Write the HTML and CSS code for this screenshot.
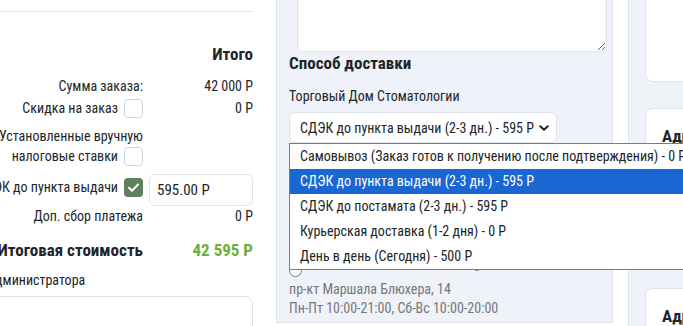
FILE: index.html
```html
<!DOCTYPE html>
<html lang="ru">
<head>
<meta charset="utf-8">
<title>Оформление заказа</title>
<link rel="stylesheet" href="styles.css">
</head>
<body>
<div class="page">
  <aside class="summary">
    <hr class="rule">
    <h3 class="summary-title">Итого</h3>
    <div class="row row-sum">
      <span class="label">Сумма заказа:</span>
      <span class="value">42 000 Р</span>
    </div>
    <div class="row row-discount">
      <span class="label">Скидка на заказ <span class="check"></span></span>
      <span class="value">0 Р</span>
    </div>
    <div class="row row-tax">
      <span class="label-block">Установленные вручную<br>налоговые ставки<span class="check check-inline"></span></span>
      <span class="value"></span>
    </div>
    <div class="row row-ship">
      <span class="label label-top">СДЭК до пункта выдачи <span class="check check-on"><svg viewBox="0 0 19 19" width="19" height="19"><path d="M5 9.8l3 2.9 6-6.2" fill="none" stroke="#fff" stroke-width="2" stroke-linecap="round" stroke-linejoin="round"/></svg></span></span>
      <span class="value"><span class="price-input">595.00 Р</span></span>
    </div>
    <div class="row row-fee">
      <span class="label">Доп. сбор платежа</span>
      <span class="value">0 Р</span>
    </div>
    <div class="row row-total">
      <span class="label total-label">Итоговая стоимость</span>
      <span class="value total-value">42 595 Р</span>
    </div>
    <div class="admin-label">Комментарий администратора</div>
    <div class="admin-box"></div>
  </aside>

  <section class="delivery">
    <textarea class="note"></textarea>
    <h3 class="section-title">Способ доставки</h3>
    <div class="vendor">Торговый Дом Стоматологии</div>
    <div class="select-wrap">
      <div class="select">
        <span>СДЭК до пункта выдачи (2-3 дн.) - 595 Р</span>
        <svg class="chev" viewBox="0 0 10 6" width="10" height="6"><path d="M1.2 1.2L5 4.8l3.8-3.6" fill="none" stroke="#222" stroke-width="1.9" stroke-linecap="round" stroke-linejoin="round"/></svg>
      </div>
      <div class="dropdown">
        <div class="opt">Самовывоз (Заказ готов к получению после подтверждения) - 0 Р</div>
        <div class="opt opt-active">СДЭК до пункта выдачи (2-3 дн.) - 595 Р</div>
        <div class="opt">СДЭК до постамата (2-3 дн.) - 595 Р</div>
        <div class="opt">Курьерская доставка (1-2 дня) - 0 Р</div>
        <div class="opt">День в день (Сегодня) - 500 Р</div>
      </div>
    </div>
    <div class="point">
      <div class="point-head">
        <span class="radio"></span>
        <span class="point-name">Пункт выдачи СДЭК №14</span>
        <svg class="point-icon" viewBox="0 0 10 10" width="10" height="10"><circle cx="5" cy="5" r="4" fill="none" stroke="#444" stroke-width="1.4"/></svg>
      </div>
      <div class="point-addr">пр-кт Маршала Блюхера, 14</div>
      <div class="point-addr">Пн-Пт 10:00-21:00, Сб-Вс 10:00-20:00</div>
    </div>
  </section>

  <section class="addresses">
    <div class="card card-first"></div>
    <div class="card card-mid"><div class="card-title">Адрес доставки</div></div>
    <div class="card"><div class="card-title">Адрес плательщика</div></div>
  </section>
</div>
</body>
</html>
```

FILE: styles.css
```css
html, body {
  margin: 0;
  padding: 0;
}
body {
  width: 683px;
  height: 326px;
  overflow: hidden;
  background: #ffffff;
  font-family: Roboto, "Noto Sans", sans-serif;
  font-stretch: 87.5%;
  font-size: 14px;
  line-height: 20px;
  color: #212529;
}
.page {
  display: flex;
  align-items: flex-start;
  margin-left: -124px;
}

/* ---------- summary column ---------- */
.summary {
  flex: none;
  width: 400px;
  box-sizing: border-box;
  padding: 11px 23px 0 29px;
}
.rule {
  border: 0;
  border-top: 1px solid #e4e7ec;
  margin: 0 0 0 -13px;
}
.summary-title {
  margin: 32px 0 0;
  text-align: right;
  font-size: 17px;
  line-height: 20px;
  font-weight: 700;
}
.row {
  display: grid;
  grid-template-columns: 1fr 104px;
  column-gap: 6px;
  align-items: center;
}
.label {
  display: flex;
  justify-content: flex-end;
  align-items: center;
  gap: 6px;
  white-space: nowrap;
  text-align: right;
}
.label-block {
  display: block;
  text-align: right;
  white-space: nowrap;
}
.label-top { align-self: start; margin-top: 3px; }
.value { text-align: right; }
.row-sum { margin-top: 12px; }
.row-discount { margin-top: 2px; }
.row-tax { margin-top: 8px; }
.row-ship { margin-top: 8px; }
.row-total { margin-top: 14px; }
.check {
  flex: none;
  width: 19px;
  height: 19px;
  box-sizing: border-box;
  border: 1.5px solid #cbd4e3;
  border-radius: 4px;
  background: #fff;
  display: inline-flex;
}
.check-inline {
  display: inline-block;
  vertical-align: middle;
  margin: -2px 0 0 6px;
}
.check-on {
  border: 0;
  background: #5f805f;
}
.price-input {
  display: block;
  height: 32px;
  box-sizing: border-box;
  border: 1px solid #dfe4ec;
  border-radius: 6px;
  padding: 5px 7px;
  text-align: left;
  font-size: 15px;
}
.total-label,
.total-value {
  font-size: 17px;
  font-weight: 700;
}
.total-value { color: #6aaf3d; }
.admin-label {
  margin-top: 10px;
}
.admin-box {
  margin: 6px 0 0 -13px;
  height: 60px;
  border: 1px solid #dfe4ec;
  border-radius: 8px;
}

/* ---------- delivery column ---------- */
.delivery {
  flex: none;
  position: relative;
  width: 337px;
  height: 343px;
  box-sizing: border-box;
  margin-top: -20px;
  padding: 0 12px;
  border: 1px solid #dfe4ec;
  background: #eff2f8;
}
.note {
  display: block;
  width: 310px;
  height: 72px;
  box-sizing: border-box;
  margin: -1px 0 0 8px;
  border: 1px solid #dfe4ec;
  border-radius: 0 0 6px 6px;
  background: #fff;
  resize: both;
}
.section-title {
  margin: 1px 0 0;
  font-size: 17px;
  line-height: 20px;
  font-weight: 700;
}
.vendor {
  margin-top: 13px;
}
.select-wrap {
  position: relative;
  margin-top: 6px;
}
.select {
  display: flex;
  align-items: center;
  justify-content: space-between;
  width: 268px;
  height: 31px;
  box-sizing: border-box;
  padding: 0 7px 0 10px;
  border: 1px solid #dfe4ec;
  border-radius: 6px;
  background: #fff;
  white-space: nowrap;
}
.dropdown {
  position: absolute;
  top: 31px;
  left: 0;
  width: 420px;
  border: 1px solid #7b7b7b;
  background: #fff;
  z-index: 5;
}
.opt {
  height: 25px;
  line-height: 25px;
  padding-left: 10px;
  white-space: nowrap;
}
.opt-active {
  background: #1a66d2;
  color: #fff;
}
.point {
  margin-top: 110px;
}
.point-head {
  display: flex;
  align-items: flex-start;
  gap: 8px;
}
.radio {
  flex: none;
  width: 13px;
  height: 13px;
  margin-top: 11px;
  box-sizing: border-box;
  border: 1px solid #777;
  border-radius: 50%;
  background: #fff;
}
.point-name {
  font-weight: 700;
  line-height: 16px;
  white-space: nowrap;
}
.point-icon {
  flex: none;
  margin: 8px 0 0 4px;
}
.point-addr {
  line-height: 19px;
  color: #777;
}
.point-head + .point-addr { margin-top: 3px; }

/* ---------- addresses column ---------- */
.addresses {
  flex: 1;
  min-width: 0;
  margin: -100px 0 0 15px;
  padding: 0 0 20px 16px;
  border-left: 1px solid #dfe4ec;
  background: #eff2f8;
}
.card {
  width: 300px;
  margin-top: 26px;
  padding: 17px 16px;
  border: 1px solid #dfe4ec;
  border-radius: 8px;
  background: #fff;
  height: 120px;
  box-sizing: border-box;
}
.card-first {
  margin-top: 0;
  height: 182px;
  border-top: 0;
  border-radius: 0 0 8px 8px;
}
.card-mid { height: 154px; }
.card-title {
  font-size: 17px;
  font-weight: 700;
  white-space: nowrap;
}
```
